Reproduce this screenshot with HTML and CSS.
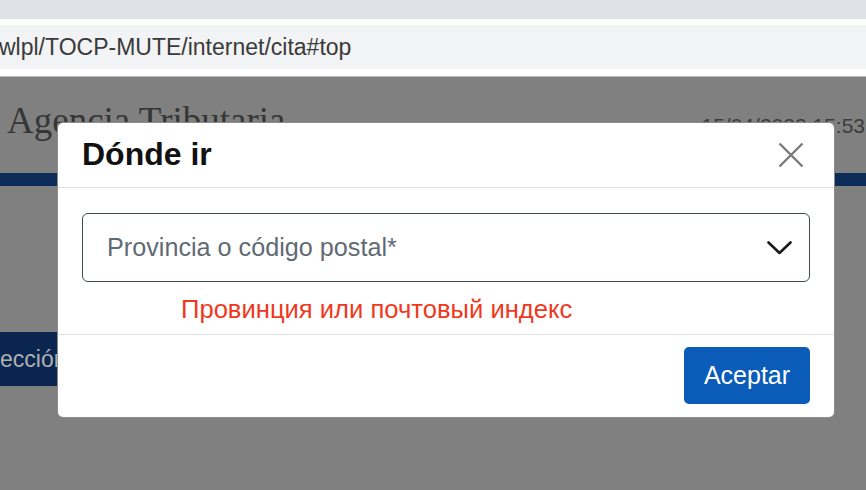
FILE: index.html
```html
<!DOCTYPE html>
<html lang="es">
<head>
<meta charset="utf-8">
<title>Dónde ir</title>
<link rel="stylesheet" href="styles.css">
</head>
<body>
<div class="chrome">
  <div class="tabstrip"></div>
  <div class="url-row">
    <div class="urlbar"><span class="url-text">wlpl/TOCP-MUTE/internet/cita#top</span></div>
  </div>
</div>
<div class="page">
  <div class="site-head">
    <div class="site-title">Agencia Tributaria</div>
    <div class="site-date">15/04/2022 15:53</div>
  </div>
  <div class="site-bar"></div>
  <div class="site-nav">
    <div class="nav-btn">ección</div>
  </div>
</div>

<div class="modal" role="dialog">
  <div class="modal-head">
    <div class="modal-title">Dónde ir</div>
    <div class="modal-close" aria-label="Cerrar">
      <svg width="26" height="26" viewBox="0 0 26 26"><path d="M1.5 1.5 L24.5 24.5 M24.5 1.5 L1.5 24.5" stroke="#7a7a7a" stroke-width="2.4" fill="none"/></svg>
    </div>
  </div>
  <div class="modal-body">
    <div class="select">
      <span class="select-text">Provincia o código postal*</span>
      <svg class="chev" width="25" height="14" viewBox="0 0 25 14"><path d="M1.5 1.5 L12.5 12 L23.5 1.5" stroke="#1a1a1a" stroke-width="2.6" fill="none" stroke-linecap="round" stroke-linejoin="round"/></svg>
    </div>
    <div class="hint">Провинция или почтовый индекс</div>
  </div>
  <div class="modal-foot">
    <div class="btn">Aceptar</div>
  </div>
</div>
</body>
</html>
```
FILE: styles.css
```css
html, body {
  margin: 0;
  padding: 0;
  height: 100%;
  overflow: hidden;
}
body {
  font-family: "Liberation Sans", Arial, sans-serif;
  background: #808080;
}
.chrome {
  background: #ffffff;
  border-bottom: 1px solid #b9b9b9;
}
.tabstrip {
  height: 19px;
  background: #dee1e6;
}
.url-row {
  padding: 6px 0 7px 0;
  background: #ffffff;
}
.urlbar {
  height: 44px;
  line-height: 44px;
  background: #f1f3f4;
  overflow: hidden;
  white-space: nowrap;
}
.url-text {
  display: inline-block;
  margin-left: -1px;
  font-size: 23px;
  color: #3a3a3a;
}
.page {
  height: 413px;
  background: #808080;
  display: flex;
  flex-direction: column;
  overflow: hidden;
}
.site-head {
  height: 96px;
  box-sizing: border-box;
  padding-top: 22px;
  display: flex;
  justify-content: space-between;
  align-items: baseline;
}
.site-title {
  font-family: "Liberation Serif", "Times New Roman", serif;
  font-size: 37px;
  line-height: 44px;
  color: #363636;
  padding-left: 7px;
}
.site-date {
  font-size: 21px;
  color: #3c3c3c;
  padding-right: 1px;
}
.site-bar {
  height: 13px;
  background: #0b2b58;
}
.site-nav {
  margin-top: 146px;
  display: flex;
}
.nav-btn {
  width: 70px;
  height: 54px;
  line-height: 54px;
  background: #0a2550;
  color: #b0b0b0;
  font-size: 23px;
  white-space: nowrap;
  overflow: hidden;
}
.modal {
  position: absolute;
  left: 57px;
  top: 122px;
  width: 778px;
  height: 296px;
  box-sizing: border-box;
  background: #ffffff;
  border: 1px solid rgba(0, 0, 0, 0.45);
  border-radius: 6px;
  display: flex;
  flex-direction: column;
}
.modal-head {
  height: 65px;
  box-sizing: border-box;
  padding: 12px 30px 0 24px;
  border-bottom: 1px solid #dee2e6;
  display: flex;
  align-items: flex-start;
}
.modal-title {
  font-size: 32px;
  line-height: 38px;
  font-weight: bold;
  color: #111111;
}
.modal-close {
  margin-left: auto;
  margin-top: 7px;
  width: 26px;
  height: 26px;
}
.modal-close svg {
  display: block;
}
.modal-body {
  padding: 25px 24px 10px 24px;
  border-bottom: 1px solid #dee2e6;
}
.select {
  height: 69px;
  box-sizing: border-box;
  border: 1px solid #3e4a56;
  border-radius: 6px;
  padding: 0 17px 0 24px;
  display: flex;
  align-items: center;
}
.select-text {
  font-size: 25.2px;
  color: #5f6a74;
}
.chev {
  margin-left: auto;
  display: block;
}
.hint {
  margin-top: 13px;
  margin-left: 99px;
  font-size: 25.6px;
  line-height: 29px;
  color: #ef391d;
}
.modal-foot {
  flex: 1;
  padding: 12px 24px 0 0;
  display: flex;
  justify-content: flex-end;
  align-items: flex-start;
}
.btn {
  width: 126px;
  height: 57px;
  line-height: 57px;
  text-align: center;
  background: #0b5cb9;
  color: #ffffff;
  font-size: 25px;
  border-radius: 5px;
}
```
